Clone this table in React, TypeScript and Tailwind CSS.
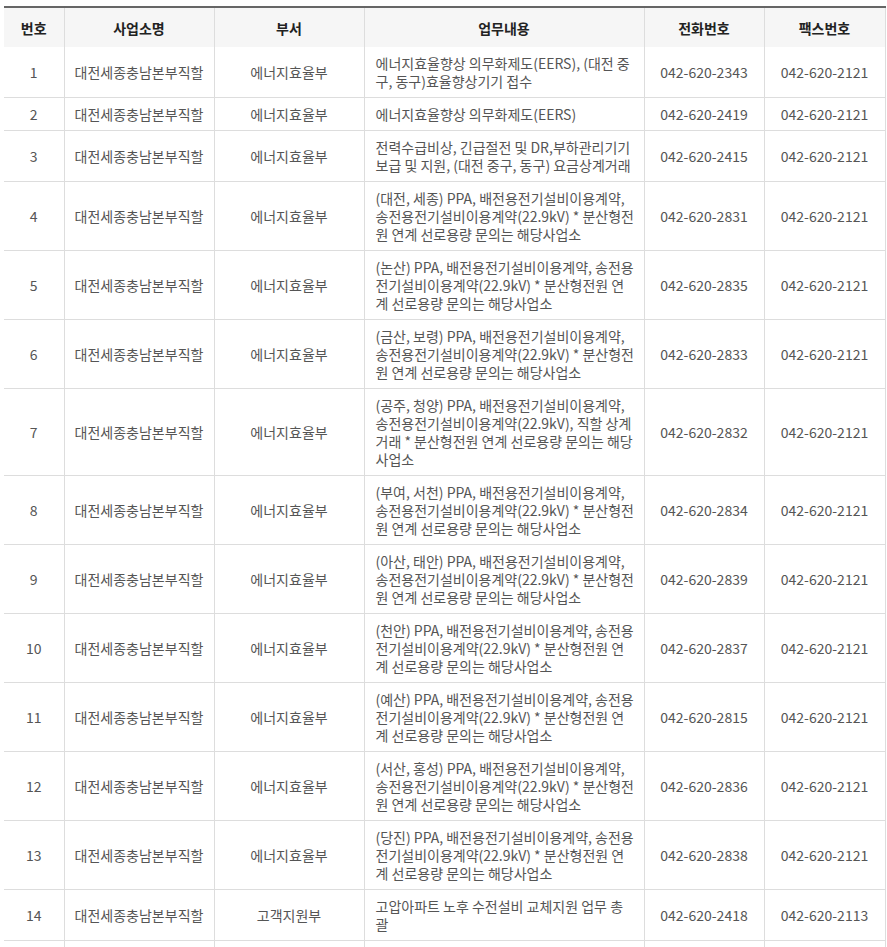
import React from 'react';

type Row = {
  no: number;
  office: string;
  dept: string;
  work: string[];
  tel: string;
  fax: string;
};

const OFFICE = '대전세종충남본부직할';
const DEPT = '에너지효율부';

// 업무내용 줄바꿈은 원본 화면 기준
const ppaA = (area: string) => [
  `(${area}) PPA, 배전용전기설비이용계약,`,
  '송전용전기설비이용계약(22.9kV) * 분산형전',
  '원 연계 선로용량 문의는 해당사업소',
];

const ppaB = (area: string) => [
  `(${area}) PPA, 배전용전기설비이용계약, 송전용`,
  '전기설비이용계약(22.9kV) * 분산형전원 연',
  '계 선로용량 문의는 해당사업소',
];

const rows: Row[] = [
  {
    no: 1,
    office: OFFICE,
    dept: DEPT,
    work: ['에너지효율향상 의무화제도(EERS), (대전 중', '구, 동구)효율향상기기 접수'],
    tel: '042-620-2343',
    fax: '042-620-2121',
  },
  { no: 2, office: OFFICE, dept: DEPT, work: ['에너지효율향상 의무화제도(EERS)'], tel: '042-620-2419', fax: '042-620-2121' },
  {
    no: 3,
    office: OFFICE,
    dept: DEPT,
    work: ['전력수급비상, 긴급절전 및 DR,부하관리기기', '보급 및 지원, (대전 중구, 동구) 요금상계거래'],
    tel: '042-620-2415',
    fax: '042-620-2121',
  },
  { no: 4, office: OFFICE, dept: DEPT, work: ppaA('대전, 세종'), tel: '042-620-2831', fax: '042-620-2121' },
  { no: 5, office: OFFICE, dept: DEPT, work: ppaB('논산'), tel: '042-620-2835', fax: '042-620-2121' },
  { no: 6, office: OFFICE, dept: DEPT, work: ppaA('금산, 보령'), tel: '042-620-2833', fax: '042-620-2121' },
  {
    no: 7,
    office: OFFICE,
    dept: DEPT,
    work: [
      '(공주, 청양) PPA, 배전용전기설비이용계약,',
      '송전용전기설비이용계약(22.9kV), 직할 상계',
      '거래 * 분산형전원 연계 선로용량 문의는 해당',
      '사업소',
    ],
    tel: '042-620-2832',
    fax: '042-620-2121',
  },
  { no: 8, office: OFFICE, dept: DEPT, work: ppaA('부여, 서천'), tel: '042-620-2834', fax: '042-620-2121' },
  { no: 9, office: OFFICE, dept: DEPT, work: ppaA('아산, 태안'), tel: '042-620-2839', fax: '042-620-2121' },
  { no: 10, office: OFFICE, dept: DEPT, work: ppaB('천안'), tel: '042-620-2837', fax: '042-620-2121' },
  { no: 11, office: OFFICE, dept: DEPT, work: ppaB('예산'), tel: '042-620-2815', fax: '042-620-2121' },
  { no: 12, office: OFFICE, dept: DEPT, work: ppaA('서산, 홍성'), tel: '042-620-2836', fax: '042-620-2121' },
  { no: 13, office: OFFICE, dept: DEPT, work: ppaB('당진'), tel: '042-620-2838', fax: '042-620-2121' },
  {
    no: 14,
    office: OFFICE,
    dept: '고객지원부',
    work: ['고압아파트 노후 수전설비 교체지원 업무 총', '괄'],
    tel: '042-620-2418',
    fax: '042-620-2113',
  },
  {
    no: 15,
    office: OFFICE,
    dept: '고객지원부',
    work: ['고압고객 전기요금 관련 업무 및 요금 상담,', '미수요금 관리'],
    tel: '042-620-2417',
    fax: '042-620-2113',
  },
];

const th = 'pt-[11px] pb-[10px] px-[6px] text-center font-bold text-[#222] border-r border-[#dddddd]';
const td = 'py-[7px] px-[6px] text-center align-middle border-r border-[#dddddd]';

export default function App() {
  return (
    <div
      className="h-[947px] overflow-hidden bg-white pt-[6px] pl-[4px] text-[14px] leading-[18px] text-[#555]"
      style={{ fontFamily: '"Noto Sans CJK KR", "Noto Sans", sans-serif' }}
    >
      <table className="w-[881px] table-fixed border-collapse border-t-2 border-[#666]">
        <colgroup>
          <col className="w-[60px]" />
          <col className="w-[150px]" />
          <col className="w-[150px]" />
          <col className="w-[280px]" />
          <col className="w-[120px]" />
          <col className="w-[121px]" />
        </colgroup>
        <thead className="bg-[#f6f6f6]">
          <tr>
            <th className={th}>번호</th>
            <th className={th}>사업소명</th>
            <th className={th}>부서</th>
            <th className={th}>업무내용</th>
            <th className={th}>전화번호</th>
            <th className={th}>팩스번호</th>
          </tr>
        </thead>
        <tbody>
          {rows.map((row) => (
            <tr key={row.no} className="border-b border-[#dddddd]">
              <td className={td}>{row.no}</td>
              <td className={td}>{row.office}</td>
              <td className={td}>{row.dept}</td>
              <td className="py-[7px] pl-[11px] pr-[4px] text-left align-middle border-r border-[#dddddd] whitespace-nowrap">
                {row.work.map((line, i) => (
                  <React.Fragment key={i}>
                    {i > 0 && <br />}
                    {line}
                  </React.Fragment>
                ))}
              </td>
              <td className={td}>{row.tel}</td>
              <td className={td}>{row.fax}</td>
            </tr>
          ))}
        </tbody>
      </table>
    </div>
  );
}
